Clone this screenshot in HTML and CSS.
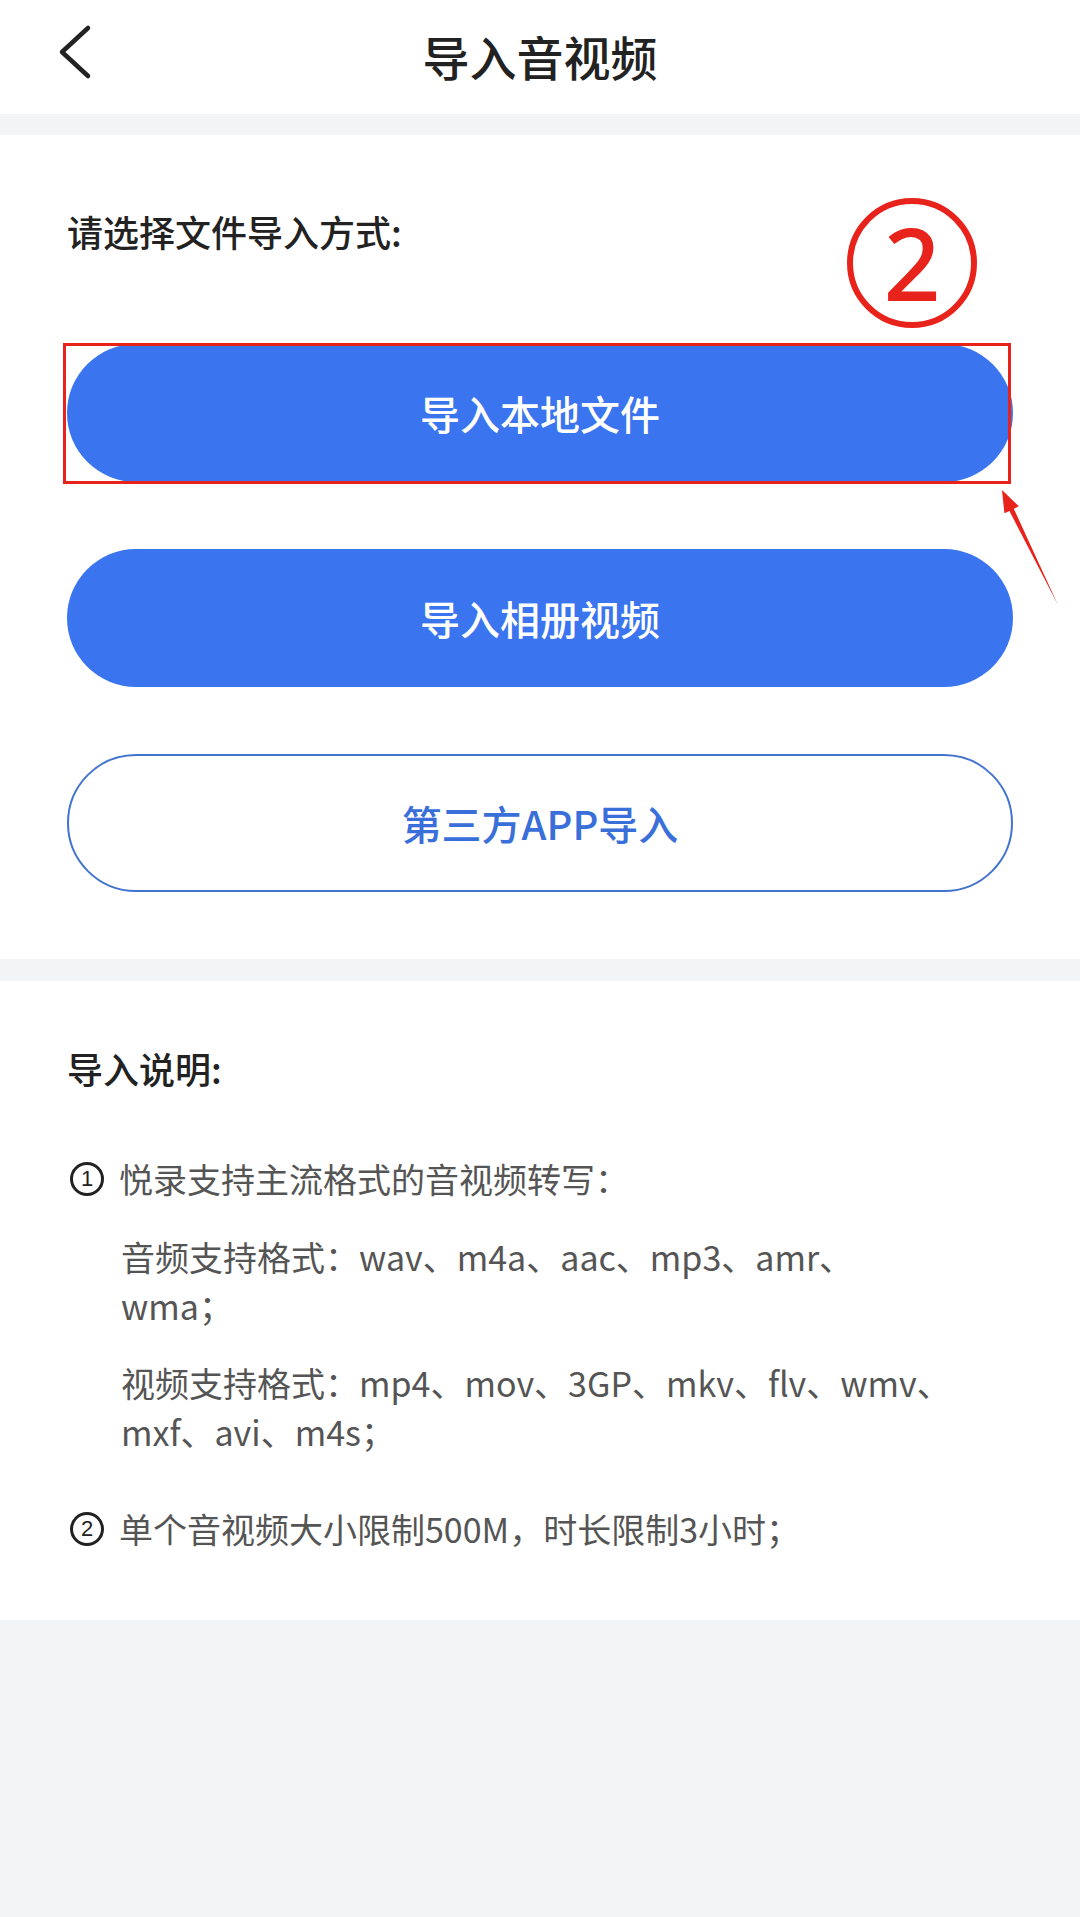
FILE: index.html
```html
<!DOCTYPE html>
<html lang="zh-CN">
<head>
    <meta charset="UTF-8">
    <title>导入音视频</title>
    <link rel="stylesheet" href="styles.css">
</head>
<body>
<div class="page">
    <div class="nav-bar">
        <a class="back-btn" href="#">
            <svg width="50" height="70" viewBox="0 0 50 70">
                <polyline points="40,8 14,32 40,56" fill="none" stroke="#222" stroke-width="4.5" stroke-linecap="round" stroke-linejoin="round"/>
            </svg>
        </a>
        <h1 class="nav-title">导入音视频</h1>
    </div>

    <div class="card choose">
        <p class="card-title">请选择文件导入方式:</p>

        <div class="btn-list">
            <button class="btn btn-primary">导入本地文件</button>
            <button class="btn btn-primary">导入相册视频</button>
            <button class="btn btn-outline">第三方APP导入</button>
        </div>

        <!-- 标注 -->
        <div class="mark-box"></div>
        <div class="mark-num">2</div>
        <svg class="mark-arrow" width="70" height="130" viewBox="0 0 70 130">
            <polygon points="6,10 22.8,26.3 17.8,28.7 62,125 13.4,30.9 8.4,33.3" fill="#e8231b"/>
        </svg>
    </div>

    <div class="card notes">
        <p class="card-title">导入说明:</p>

        <div class="note-item">
            <span class="num">1</span>
            <span>悦录支持主流格式的音视频转写：</span>
        </div>
        <p class="note-sub">音频支持格式：wav、m4a、aac、mp3、amr、<br>wma；</p>
        <p class="note-sub">视频支持格式：mp4、mov、3GP、mkv、flv、wmv、<br>mxf、avi、m4s；</p>

        <div class="note-item last">
            <span class="num">2</span>
            <span>单个音视频大小限制500M，时长限制3小时；</span>
        </div>
    </div>
</div>
</body>
</html>
```

FILE: styles.css
```css
* {
    box-sizing: border-box;
}
body {
    margin: 0;
    background-color: #f3f4f6;
    font-family: "Noto Sans CJK SC", "Liberation Sans", sans-serif;
    color: #222;
}
.page {
    width: 1080px;
    min-height: 1917px;
    background-color: #f3f4f6;
}
.nav-bar {
    height: 114px;
    background-color: #fff;
    display: flex;
    align-items: center;
    justify-content: center;
    position: relative;
}
.back-btn {
    position: absolute;
    left: 48px;
    top: 20px;
}
.nav-title {
    margin: 0 0 4px;
    font-size: 47px;
    font-weight: 500;
    color: #222;
}
.card {
    background-color: #fff;
    padding: 0 67px;
    position: relative;
}
.choose {
    margin-top: 21px;
    padding-top: 70px;
    padding-bottom: 67px;
}
.card-title {
    margin: 0;
    font-size: 36px;
    line-height: 52px;
    font-weight: 500;
    color: #222;
}
.btn-list {
    margin-top: 87px;
    display: flex;
    flex-direction: column;
    gap: 67px;
}
.btn {
    height: 138px;
    width: 100%;
    border-radius: 69px;
    font-family: inherit;
    font-size: 40px;
    font-weight: 500;
    cursor: pointer;
}
.btn-primary {
    background-color: #3a74ef;
    color: #fff;
    border: none;
}
.btn-outline {
    background-color: #fff;
    color: #3a6fd9;
    border: 2px solid #4273cf;
}
.mark-box {
    position: absolute;
    left: 63px;
    top: 208px;
    width: 948px;
    height: 141px;
    border: 3px solid #e8231b;
}
.mark-num {
    position: absolute;
    left: 847px;
    top: 63px;
    width: 130px;
    height: 130px;
    border: 6px solid #e8231b;
    border-radius: 50%;
    color: #e8231b;
    font-family: "Noto Sans", sans-serif;
    font-size: 100px;
    line-height: 116px;
    text-align: center;
    font-weight: 500;
}
.mark-arrow {
    position: absolute;
    left: 996px;
    top: 345px;
}
.notes {
    margin-top: 22px;
    padding-top: 61px;
    padding-bottom: 66px;
}
.note-item {
    display: flex;
    align-items: center;
    gap: 15px;
    margin-top: 60px;
    font-size: 34px;
    line-height: 50px;
    color: #555;
}
.note-item.last {
    margin-top: 48px;
}
.num {
    width: 34px;
    height: 34px;
    border: 3px solid #222;
    border-radius: 50%;
    display: flex;
    align-items: center;
    justify-content: center;
    font-family: "Liberation Sans", sans-serif;
    font-size: 22px;
    color: #222;
    flex-shrink: 0;
    margin-left: 3px;
}
.note-sub {
    margin: 28px 0 0 54px;
    font-size: 34px;
    line-height: 49px;
    color: #555;
}
```
